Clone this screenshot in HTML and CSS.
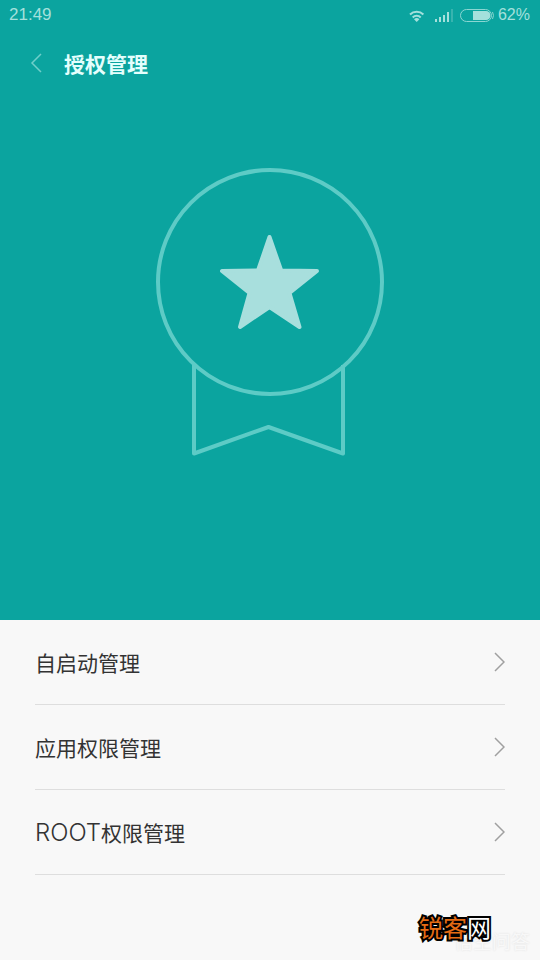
FILE: index.html
```
<!DOCTYPE html>
<html lang="zh-CN">
<head>
<meta charset="utf-8">
<meta name="viewport" content="width=device-width, initial-scale=1">
<title>授权管理</title>
<link rel="stylesheet" href="styles.css">
</head>
<body>
<section class="hero">
  <div class="status">
    <span class="clock">21:49</span>
    <svg class="signals" width="52" height="20" viewBox="0 0 52 20" aria-hidden="true">
      <g fill="none" stroke="#a4e0dc" stroke-width="2">
        <path d="M2 9.500a9.500 9.500 0 0 1 13.400 0" />
        <path d="M4.700 12.500a5.600 5.600 0 0 1 8 0" />
      </g>
      <path d="M8.700 17l-2.700-2.700a3.800 3.800 0 0 1 5.400 0z" fill="#a4e0dc" />
      <path d="M28 14v3M32 12v5M36 10v7M40 7v10" stroke="#a4e0dc" stroke-width="2" />
      <path d="M44 4v13" stroke="#37b4af" stroke-width="2" />
    </svg>
    <svg class="battery" width="36" height="20" viewBox="0 0 36 20" aria-hidden="true">
      <rect x="0.500" y="4.500" width="31" height="12" rx="6" fill="none" stroke="#8bd6d2" />
      <path d="M32.500 7q2 3.500 0 7" fill="none" stroke="#8bd6d2" />
      <path d="M13 6h13a4.500 4.500 0 0 1 0 9H13z" fill="#a4e0dc" />
    </svg>
    <span class="percent">62%</span>
  </div>
  <header class="bar">
    <button class="back" type="button" aria-label="返回">
      <svg width="12" height="20" viewBox="0 0 12 20"><path d="M11 1L2 10l9 9" fill="none" stroke="#6fcfca" stroke-width="1.500" /></svg>
    </button>
    <h1>授权管理</h1>
  </header>
  <svg class="medal" width="232" height="292" viewBox="154 166 232 292" aria-hidden="true">
    <g fill="none" stroke="#5dcbc6" stroke-width="4" stroke-linejoin="round">
      <circle cx="270" cy="282" r="112" />
      <path d="M194 365v88.500L268.500 427 343 453.500V365" />
    </g>
    <path d="M269.500 237L281.200 270.500 317 271 289.500 293 299.500 327 269.500 307 240 327 249.500 293 222 271 258 270.500z" fill="#a8dfdd" stroke="#a8dfdd" stroke-width="4" stroke-linejoin="round" />
  </svg>
</section>
<main class="list">
  <a class="row" href="#autostart">自启动管理<svg width="12" height="20" viewBox="0 0 12 20" aria-hidden="true"><path d="M2 1l9 9-9 9" /></svg></a>
  <a class="row" href="#apps">应用权限管理<svg width="12" height="20" viewBox="0 0 12 20" aria-hidden="true"><path d="M2 1l9 9-9 9" /></svg></a>
  <a class="row" href="#root"><span><span class="latin">ROOT</span>权限管理</span><svg width="12" height="20" viewBox="0 0 12 20" aria-hidden="true"><path d="M2 1l9 9-9 9" /></svg></a>
</main>
<div class="marks">
  <span class="faint">悟空问答</span>
  <span class="brand">锐客<b>网</b></span>
</div>
</body>
</html>
```
FILE: styles.css
```
* { box-sizing: border-box; }
body {
  margin: 0;
  min-height: 100vh;
  position: relative;
  background: #f8f8f8;
  color: #333;
  font-family: Roboto, "Noto Sans CJK SC", sans-serif;
}
.hero {
  background: #0ba49f;
  padding-bottom: 162px;
  display: flex;
  flex-direction: column;
}
.status {
  display: flex;
  align-items: center;
  height: 30px;
  padding: 0 10px 0 9px;
  color: #a4e0dc;
  font-family: "Liberation Sans", sans-serif;
  font-size: 17px;
}
.signals { margin-left: auto; }
.battery { margin-right: 2px; }
.percent { font-size: 16px; }
.bar {
  display: flex;
  align-items: center;
  height: 66px;
  padding-left: 30px;
}
.back {
  display: flex;
  width: 34px;
  padding: 0;
  border: 0;
  background: none;
}
h1 {
  margin: 0;
  color: #e4fffd;
  font-size: 21px;
  font-weight: 700;
}
.medal { align-self: center; margin-top: 70px; }
.list { padding: 0 35px; }
.row {
  display: flex;
  align-items: center;
  justify-content: space-between;
  height: 85px;
  border-bottom: 1px solid #dedede;
  color: #333;
  font-size: 21px;
  text-decoration: none;
}
.row path { fill: none; stroke: #a0a0a0; stroke-width: 1.5; }
.latin { font-family: Inter, sans-serif; font-weight: 300; font-size: 24px; }
.marks { position: absolute; right: 10px; bottom: 0; width: 112px; height: 50px; }
.faint {
  position: absolute;
  right: 0;
  bottom: 3px;
  color: #f8f8f8;
  font-size: 19px;
  line-height: 28px;
  text-shadow: 0 0 2px #ddd;
}
.brand {
  position: absolute;
  left: 1px;
  top: 5px;
  color: #e56c14;
  font-size: 24px;
  font-weight: 400;
  line-height: 28px;
  -webkit-text-stroke: 4px #000;
  paint-order: stroke fill;
  white-space: nowrap;
}
.brand b { color: #fff; font-weight: 400; }
```
